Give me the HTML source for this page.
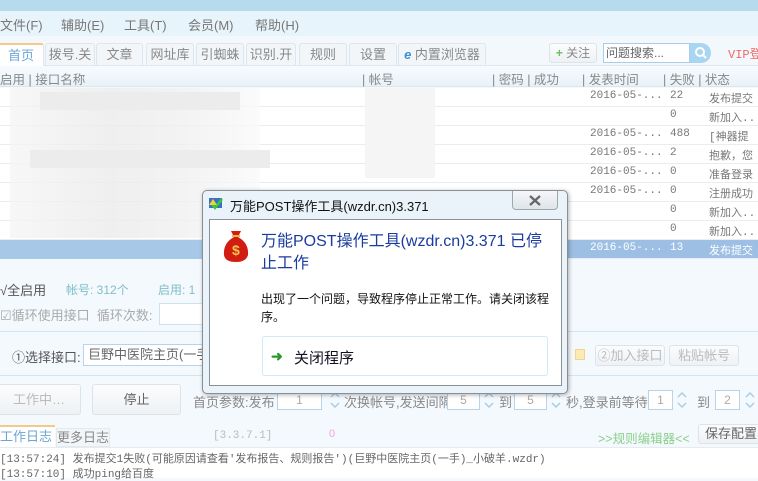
<!DOCTYPE html>
<html><head><meta charset="utf-8"><style>
*{margin:0;padding:0;box-sizing:border-box}
body{width:758px;height:478px;overflow:hidden;background:#f4f9fd;font-family:"Liberation Sans","Noto Sans CJK SC",sans-serif;font-size:12px;color:#333;position:relative}
.a{position:absolute;white-space:nowrap}
.g{color:#888}
.tab{position:absolute;top:43px;height:22px;border:1px solid #dde6ee;border-bottom:none;background:#f3f6f9;color:#888;font-size:13px;line-height:21px;text-align:center;border-radius:3px 3px 0 0}
.row{position:absolute;left:0;width:758px;height:19px;border-bottom:1px solid #e6edf3;background:#fff}
.cell{position:absolute;top:2px;font-family:"Liberation Mono","Noto Sans CJK SC",monospace;font-size:11px;color:#777}
.btn{position:absolute;border:1px solid #dde3e8;background:linear-gradient(#fbfcfd,#eef2f5);border-radius:3px;color:#888;text-align:center;font-size:13px}
.inp{position:absolute;border:1px solid #b8d4ea;background:#fff;height:20px;color:#aaa;text-align:center;font-size:12px;line-height:18px}
.spin{position:absolute;width:14px;height:20px}
</style></head><body>
<div class="a" style="left:0;top:0;width:758px;height:11px;background:#b5dbed"></div>
<div class="a" style="left:0;top:11px;width:758px;height:25px;background:#e8f4fb"></div>
<div class="a g" style="left:0;top:15px;font-size:13px;color:#777">文件(F)</div>
<div class="a g" style="left:61px;top:15px;font-size:13px;color:#777">辅助(E)</div>
<div class="a g" style="left:124px;top:15px;font-size:13px;color:#777">工具(T)</div>
<div class="a g" style="left:188px;top:15px;font-size:13px;color:#777">会员(M)</div>
<div class="a g" style="left:255px;top:15px;font-size:13px;color:#777">帮助(H)</div>
<div class="a" style="left:0;top:36px;width:758px;height:30px;background:#f3f8fc;border-bottom:1px solid #dfe8ef"></div>
<div class="tab" style="left:-2px;width:46px;background:#fff;color:#6aa5d6;border-top:2px solid #f5c98a;height:24px">首页</div>
<div class="tab" style="left:45px;width:50px">拨号.关</div>
<div class="tab" style="left:96px;width:47px">文章</div>
<div class="tab" style="left:146px;width:48px">网址库</div>
<div class="tab" style="left:196px;width:48px">引蜘蛛</div>
<div class="tab" style="left:246px;width:50px">识别.开</div>
<div class="tab" style="left:299px;width:48px">规则</div>
<div class="tab" style="left:349px;width:48px">设置</div>
<div class="tab" style="left:398px;width:88px"><span style="color:#3a8fd8;font-style:italic;font-weight:bold">e</span> 内置浏览器</div>
<div class="btn" style="left:549px;top:43px;width:48px;height:20px;line-height:18px;font-size:12px"><span style="color:#6cbf5e;font-weight:bold">+</span> 关注</div>
<div class="a" style="left:603px;top:43px;width:87px;height:20px;border:1px solid #a9cde6;background:#fff;color:#666;font-size:12px;line-height:18px;padding-left:2px">问题搜索...</div>
<div class="a" style="left:690px;top:43px;width:21px;height:20px;background:#a8d6f2;border-radius:0 10px 10px 0"></div>
<svg class="a" style="left:694px;top:46px" width="14" height="14"><circle cx="6" cy="6" r="4" stroke="#fff" stroke-width="2" fill="none"/><path d="M9 9l3 3" stroke="#fff" stroke-width="2"/></svg>
<div class="a" style="left:728px;top:45px;color:#f06a6a;font-family:'Liberation Mono','Noto Sans CJK SC',monospace">VIP登</div>
<div class="a" style="left:0;top:66px;width:758px;height:21px;background:linear-gradient(#f7fbfe,#e9f2f9);border-bottom:1px solid #dbe5ee"></div>
<div class="a g" style="left:0;top:69px;font-size:12.5px">启用 | 接口名称</div>
<div class="a g" style="left:362px;top:69px;font-size:12.5px">| 帐号</div>
<div class="a g" style="left:492px;top:69px;font-size:12.5px">| 密码 | 成功</div>
<div class="a g" style="left:582px;top:69px;font-size:12.5px">| 发表时间</div>
<div class="a g" style="left:663px;top:69px;font-size:12.5px">| 失败 | 状态</div>
<div class="row" style="top:88px"><span class="cell" style="left:590px">2016-05-...</span><span class="cell" style="left:670px">22</span><span class="cell" style="left:709px">发布提交</span></div>
<div class="row" style="top:107px"><span class="cell" style="left:670px">0</span><span class="cell" style="left:709px">新加入..</span></div>
<div class="row" style="top:126px"><span class="cell" style="left:590px">2016-05-...</span><span class="cell" style="left:670px">488</span><span class="cell" style="left:709px">[神器提示</span></div>
<div class="row" style="top:145px"><span class="cell" style="left:590px">2016-05-...</span><span class="cell" style="left:670px">2</span><span class="cell" style="left:709px">抱歉，您</span></div>
<div class="row" style="top:164px"><span class="cell" style="left:590px">2016-05-...</span><span class="cell" style="left:670px">0</span><span class="cell" style="left:709px">准备登录</span></div>
<div class="row" style="top:183px"><span class="cell" style="left:590px">2016-05-...</span><span class="cell" style="left:670px">0</span><span class="cell" style="left:709px">注册成功</span></div>
<div class="row" style="top:202px"><span class="cell" style="left:670px">0</span><span class="cell" style="left:709px">新加入..</span></div>
<div class="row" style="top:221px"><span class="cell" style="left:670px">0</span><span class="cell" style="left:709px">新加入..</span></div>
<div class="row" style="top:240px;background:#9dbfe3"><span class="cell" style="left:590px;color:#fff">2016-05-...</span><span class="cell" style="left:670px;color:#fff">13</span><span class="cell" style="left:709px;color:#fff">发布提交</span></div>
<div class="a" style="left:10px;top:88px;width:250px;height:150px;background:linear-gradient(90deg,#f5f5f5,#ebebeb 40%,#f0f0f0 70%,#fafafa);opacity:.8"></div>
<div class="a" style="left:40px;top:92px;width:200px;height:18px;background:#ececec"></div>
<div class="a" style="left:30px;top:150px;width:240px;height:18px;background:#ececec"></div>
<div class="a" style="left:365px;top:88px;width:70px;height:90px;background:#f5f5f5"></div>
<div class="a" style="left:0;top:240px;width:205px;height:19px;background:#a8c8e8"></div>
<div class="a" style="left:0;top:259px;width:758px;height:120px;background:#f4f9fd"></div>
<div class="a" style="left:0;top:280px;color:#555;font-size:13px">√全启用</div>
<div class="a" style="left:66px;top:281px;color:#7fbfc8">帐号: 312个</div>
<div class="a" style="left:158px;top:281px;color:#7fbfc8">启用: 1</div>
<div class="a g" style="left:0;top:305px;font-size:13px;color:#aaa">☑循环使用接口 &nbsp;循环次数:</div>
<div class="a" style="left:159px;top:303px;width:45px;height:22px;border:1px solid #cfe0ee;background:#fff"></div>
<div class="a" style="left:0;top:331px;width:758px;height:1px;background:#cde6f3"></div>
<div class="a" style="left:12px;top:347px;color:#555;font-size:13px">①选择接口:</div>
<div class="a" style="left:83px;top:344px;width:130px;height:22px;border:1px solid #b8d4ea;background:#fff;color:#666;font-size:13px;line-height:20px;padding-left:4px">巨野中医院主页(一手</div>
<div class="a" style="left:575px;top:349px;width:10px;height:11px;background:#fde9b3;border:1px solid #f1d58c"></div>
<div class="btn" style="left:595px;top:345px;width:70px;height:21px;line-height:19px;color:#bbb">②加入接口</div>
<div class="btn" style="left:669px;top:345px;width:70px;height:21px;line-height:19px;color:#bbb">粘贴帐号</div>
<div class="a" style="left:0;top:375px;width:758px;height:1px;background:#cde6f3"></div>
<div class="btn" style="left:-3px;top:384px;width:84px;height:31px;line-height:29px;color:#bbb">工作中…</div>
<div class="btn" style="left:92px;top:384px;width:89px;height:31px;line-height:29px;color:#666">停止</div>
<div class="a g" style="left:193px;top:392px;font-size:13px">首页参数:发布</div>
<div class="inp" style="left:277px;top:390px;width:45px">1</div>
<svg class="spin" style="left:328px;top:390px"><path d="M3 7l4-4 4 4M3 13l4 4 4-4" stroke="#a8cce6" stroke-width="1.5" fill="none"/></svg>
<div class="a g" style="left:344px;top:392px;font-size:13px">次换帐号,发送间隔</div>
<div class="inp" style="left:447px;top:390px;width:33px">5</div>
<svg class="spin" style="left:482px;top:390px"><path d="M3 7l4-4 4 4M3 13l4 4 4-4" stroke="#a8cce6" stroke-width="1.5" fill="none"/></svg>
<div class="a g" style="left:499px;top:392px;font-size:13px">到</div>
<div class="inp" style="left:514px;top:390px;width:33px">5</div>
<svg class="spin" style="left:549px;top:390px"><path d="M3 7l4-4 4 4M3 13l4 4 4-4" stroke="#a8cce6" stroke-width="1.5" fill="none"/></svg>
<div class="a g" style="left:566px;top:392px;font-size:13px">秒,登录前等待</div>
<div class="inp" style="left:648px;top:390px;width:25px">1</div>
<svg class="spin" style="left:675px;top:390px"><path d="M3 7l4-4 4 4M3 13l4 4 4-4" stroke="#a8cce6" stroke-width="1.5" fill="none"/></svg>
<div class="a g" style="left:697px;top:392px;font-size:13px">到</div>
<div class="inp" style="left:715px;top:390px;width:25px">2</div>
<svg class="spin" style="left:743px;top:390px"><path d="M3 7l4-4 4 4M3 13l4 4 4-4" stroke="#a8cce6" stroke-width="1.5" fill="none"/></svg>
<div class="a" style="left:0;top:425px;width:55px;height:22px;background:#fff;border-top:2px solid #f5c98a;color:#6aa5d6;font-size:13px;line-height:20px">工作日志</div>
<div class="a g" style="left:56px;top:428px;width:54px;height:19px;border:1px solid #e4e9ee;background:#f3f6f9;font-size:13px;line-height:17px;text-align:center">更多日志</div>
<div class="a" style="left:213px;top:430px;color:#bbb;font-family:'Liberation Mono',monospace;font-size:11px">[3.3.7.1]</div>
<div class="a" style="left:329px;top:428px;color:#f3a4e0;font-size:11px">0</div>
<div class="a" style="left:598px;top:428px;color:#8ccf8c;font-size:12.5px">&gt;&gt;规则编辑器&lt;&lt;</div>
<div class="btn" style="left:698px;top:424px;width:66px;height:20px;line-height:18px;color:#666">保存配置</div>
<div class="a" style="left:0;top:447px;width:758px;height:31px;background:#fff;border-top:1px solid #e4ebf1"></div>
<div class="a" style="left:0;top:450px;color:#666;font-family:'Liberation Mono','Noto Sans CJK SC',monospace;font-size:11px">[13:57:24] 发布提交1失败(可能原因请查看'发布报告、规则报告')(巨野中医院主页(一手)_小破羊.wzdr)</div>
<div class="a" style="left:0;top:465px;color:#666;font-family:'Liberation Mono','Noto Sans CJK SC',monospace;font-size:11px">[13:57:10] 成功ping给百度</div>
<div class="a" style="left:202px;top:190px;width:366px;height:204px;background:#e9f3f9;border:1px solid #8a8f94;border-radius:5px;box-shadow:1px 1px 4px rgba(0,0,0,.3)"></div>
<div class="a" style="left:512px;top:191px;width:46px;height:19px;border:1px solid #9aa;border-top:none;border-radius:0 0 4px 4px;background:linear-gradient(#f5f7f9,#dfe5ea)"></div>
<svg class="a" style="left:528px;top:195px" width="14" height="11"><path d="M2 1l10 9M12 1L2 10" stroke="#666" stroke-width="2.2"/></svg>
<svg class="a" style="left:209px;top:197px" width="14" height="14"><rect x="0" y="1" width="13" height="10" fill="#3b6fc8"/><path d="M3 7l3 4 7-9" stroke="#3c3" stroke-width="2.5" fill="none"/><path d="M4 2l4 6H0z" fill="#f5d32b"/></svg>
<div class="a" style="left:230px;top:196px;color:#111;font-size:13px">万能POST操作工具(wzdr.cn)3.371</div>
<div class="a" style="left:209px;top:219px;width:353px;height:167px;background:#fff;border:1px solid #8b9196"></div>
<svg class="a" style="left:221px;top:229px" width="30" height="34"><path d="M10 2h10l-3 6q11 6 10 18q-2 7-12 7q-11 0-12-7q-1-12 10-18z" fill="#d21d12"/><path d="M11 7h8" stroke="#e8b93a" stroke-width="2"/><text x="11" y="26" font-size="14" fill="#f3c64a" font-family="Liberation Sans" font-weight="bold">$</text></svg>
<div class="a" style="left:261px;top:231px;color:#1a3ca0;font-size:16px;line-height:22px;white-space:normal;width:290px">万能POST操作工具(wzdr.cn)3.371 已停止工作</div>
<div class="a" style="left:261px;top:290px;color:#111;font-size:12px;line-height:18px;white-space:normal;width:295px">出现了一个问题，导致程序停止正常工作。请关闭该程序。</div>
<div class="a" style="left:262px;top:336px;width:286px;height:40px;border:1px solid #cdeaf5;border-radius:3px"></div>
<div class="a" style="left:271px;top:348px;color:#2a9a2a;font-size:14px;font-weight:bold">➜</div>
<div class="a" style="left:294px;top:347px;color:#112;font-size:15px">关闭程序</div>
</body></html>
